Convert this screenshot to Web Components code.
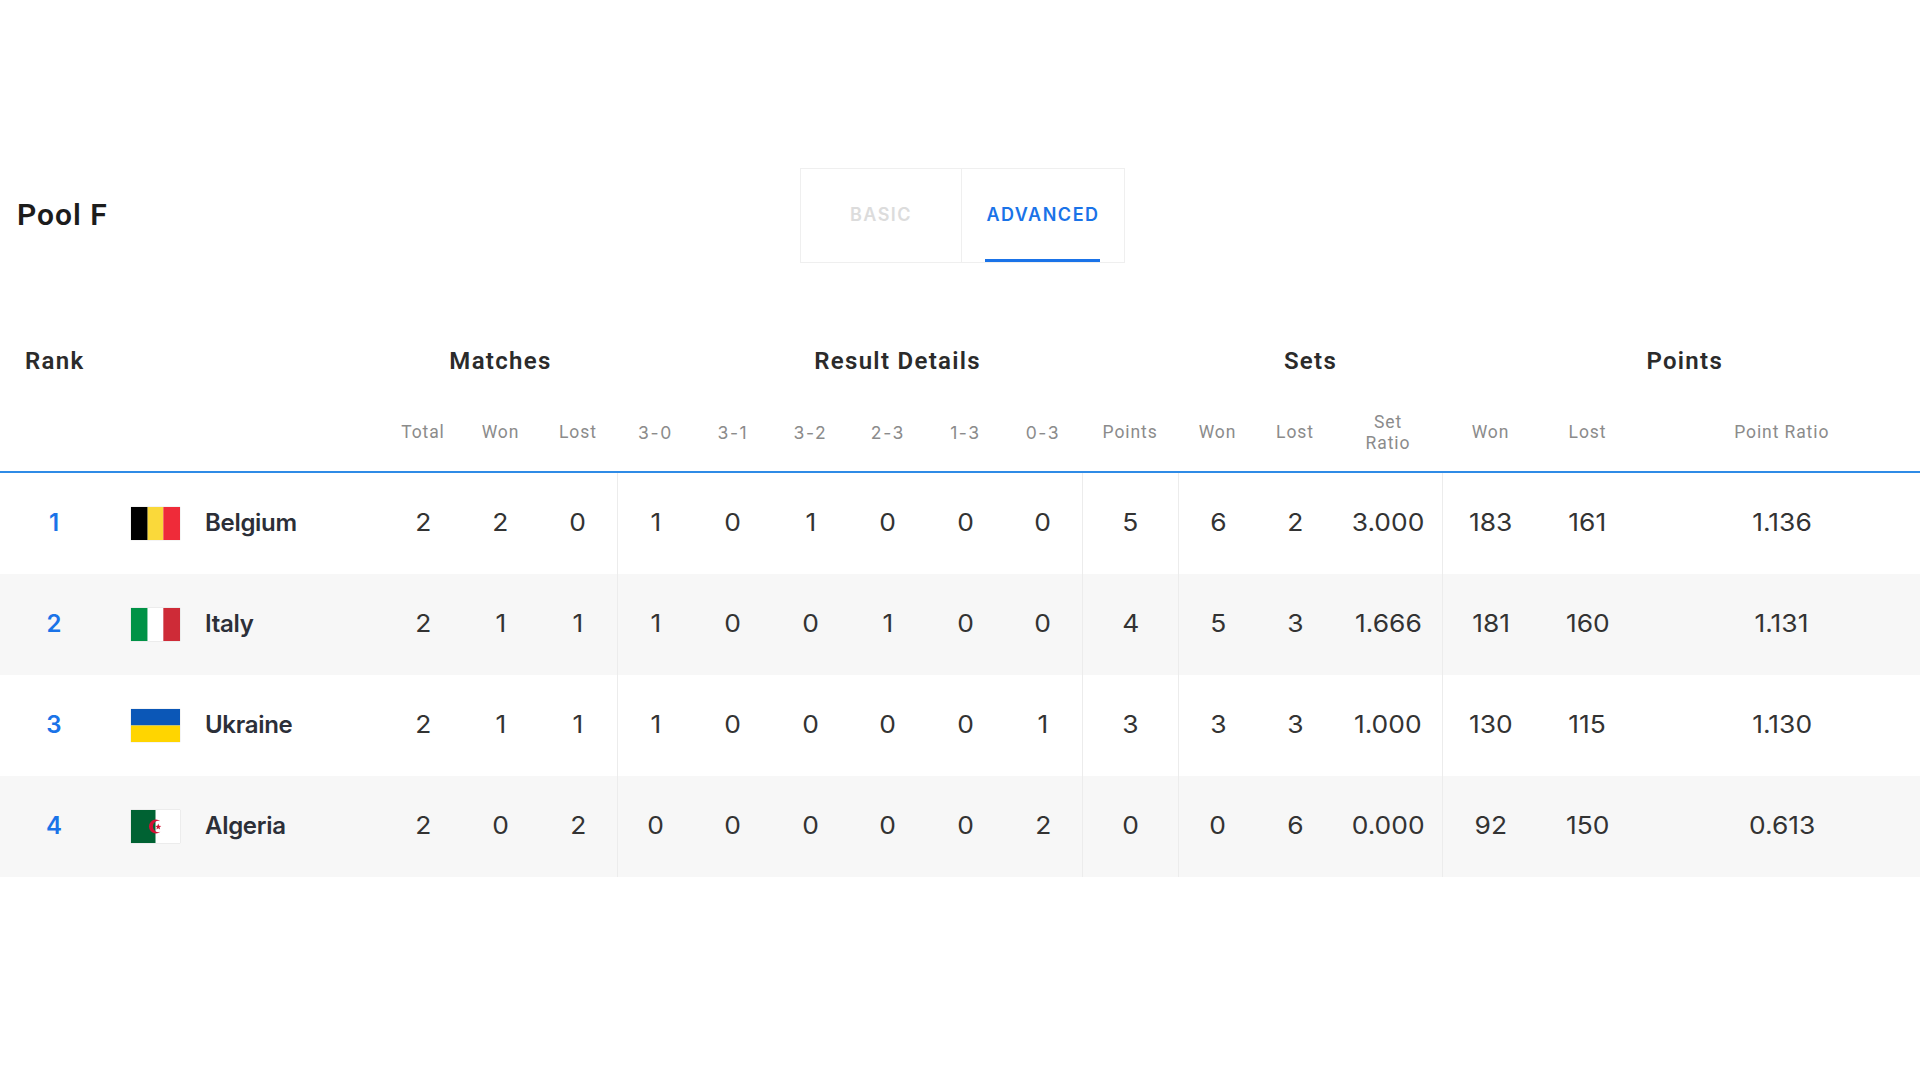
<!DOCTYPE html>
<html lang="en">
<head>
<meta charset="utf-8">
<title>Pool F</title>
<style>
  html, body { margin: 0; background: #fff; }
  body { --cols: 108px 276.2px repeat(9, 77.5px) 96.8px 78px 77px 109px 96px 98px 1fr; }
</style>
</head>
<body>
<pool-standings>
  <span slot="title">Pool F</span>
  <tab-button slot="tabs">BASIC</tab-button>
  <tab-button slot="tabs" active>ADVANCED</tab-button>
  <standing-row rank="1" flag="be" values="2,2,0,1,0,1,0,0,0,5,6,2,3.000,183,161,1.136">Belgium</standing-row>
  <standing-row rank="2" flag="it" values="2,1,1,1,0,0,1,0,0,4,5,3,1.666,181,160,1.131" striped>Italy</standing-row>
  <standing-row rank="3" flag="ua" values="2,1,1,1,0,0,0,0,1,3,3,3,1.000,130,115,1.130">Ukraine</standing-row>
  <standing-row rank="4" flag="dz" values="2,0,2,0,0,0,0,0,2,0,0,6,0.000,92,150,0.613" striped>Algeria</standing-row>
</pool-standings>

<script>
class PoolStandings extends HTMLElement {
  constructor() {
    super();
    this.attachShadow({ mode: "open" });
    const subs = ["Total", "Won", "Lost", "3-0", "3-1", "3-2", "2-3", "1-3", "0-3", "Points", "Won", "Lost", "Set<br>Ratio", "Won", "Lost", "Point Ratio"];
    this.shadowRoot.innerHTML = `
      <style>
        :host { display: block; padding-top: 168px; font-family: Roboto, "Liberation Sans", sans-serif; }
        header { display: grid; grid-template-columns: 800px auto; justify-content: start; align-items: center; }
        h2 { margin: 0 0 1px 17px; font: 600 30px/34px Roboto, sans-serif; letter-spacing: 1px; color: #1c1c1c; }
        .tabs { display: flex; border: 1px solid #efefef; }
        .groups, .subs { display: grid; grid-template-columns: var(--cols); text-align: center; }
        .groups { margin-top: 83px; font-size: 24px; line-height: 30px; font-weight: 600; letter-spacing: 1.3px; color: #2b2b2b; }
        .groups .rank { grid-column: 1 / 3; text-align: left; padding-left: 25px; }
        .groups .m { grid-column: 3 / span 3; }
        .groups .r { grid-column: 6 / span 7; }
        .groups .s { grid-column: 13 / span 3; }
        .groups .p { grid-column: 16 / span 3; padding-left: 7px; }
        .subs { height: 97px; align-items: center; padding-top: 18px; box-sizing: border-box; border-bottom: 2px solid #2f8be6;
          font-size: 17.5px; line-height: 21px; letter-spacing: .9px; color: #8b8b8b; }
        .subs div:first-child { grid-column: 3; }
        .subs div:last-child { padding-left: 7px; }
        .subs .score { font-family: Inter, sans-serif; letter-spacing: 1.6px; }
      </style>
      <header>
        <h2><slot name="title"></slot></h2>
        <div class="tabs"><slot name="tabs"></slot></div>
      </header>
      <div class="groups">
        <div class="rank">Rank</div><div class="m">Matches</div><div class="r">Result Details</div><div class="s">Sets</div><div class="p">Points</div>
      </div>
      <div class="subs">${subs.map(s => `<div${/^\d/.test(s) ? ' class="score"' : ""}>${s}</div>`).join("")}</div>
      <slot></slot>
    `;
  }
}

class TabButton extends HTMLElement {
  constructor() {
    super();
    this.attachShadow({ mode: "open" });
    this.shadowRoot.innerHTML = `
      <style>
        :host { display: block; width: 160px; height: 93px; box-sizing: border-box; position: relative; text-align: center;
          font: 600 18px/91px Inter, sans-serif; letter-spacing: 1.5px; color: #dcdcdc; }
        :host([active]) { border-left: 1px solid #efefef; width: 163px; color: #1a73e8; }
        :host([active])::after { content: ""; position: absolute; left: 23px; right: 24px; bottom: 0; height: 3px; background: #1a73e8; }
      </style>
      <slot></slot>
    `;
  }
}

class FlagIcon extends HTMLElement {
  static art = {
    be: `<rect width="17" height="33" fill="#000"/><rect x="17" width="16" height="33" fill="#fad93a"/><rect x="33" width="17" height="33" fill="#ef2b39"/>`,
    it: `<rect width="17" height="33" fill="#009246"/><rect x="17" width="16" height="33" fill="#fff"/><rect x="33" width="17" height="33" fill="#ce2b37"/>`,
    ua: `<rect width="50" height="16.5" fill="#0b57b7"/><rect y="16.5" width="50" height="16.5" fill="#ffd500"/>`,
    dz: `<rect width="50" height="33" fill="#fff"/><rect width="25" height="33" fill="#006233"/>
         <path d="M30 11.3a7 7 0 1 0 0 10.4a5.6 5.6 0 1 1 0-10.4z" fill="#d21034"/>
         <path d="M27.8 13.6l.8 2.2l2.3.1l-1.8 1.4l.6 2.2l-1.9-1.3l-1.9 1.3l.6-2.2l-1.8-1.4l2.3-.1z" fill="#d21034"/>`
  };
  constructor() {
    super();
    this.attachShadow({ mode: "open" });
  }
  connectedCallback() {
    this.shadowRoot.innerHTML = `
      <style>
        :host { display: block; width: 49px; height: 33px; flex: none; margin-top: 2px; }
        svg { display: block; width: 49px; height: 33px; box-shadow: 0 0 1px rgba(0,0,0,.25); }
      </style>
      <svg viewBox="0 0 50 33" preserveAspectRatio="none">${FlagIcon.art[this.getAttribute("code")]}</svg>
    `;
  }
}

class StandingRow extends HTMLElement {
  constructor() {
    super();
    this.attachShadow({ mode: "open" });
  }
  connectedCallback() {
    const values = this.getAttribute("values").split(",");
    // a light rule opens the 3-0, Points, Won (sets) and Won (points) columns
    const ruled = [3, 9, 10, 13];
    const cells = values.map((v, i) => `<div class="${ruled.includes(i) ? "rule" : ""}${i == 15 ? " last" : ""}"><b>${v}</b></div>`);
    this.shadowRoot.innerHTML = `
      <style>
        :host { display: grid; grid-template-columns: var(--cols); height: 101px; align-items: stretch; text-align: center;
          font: 400 24px Inter, sans-serif; color: #333; }
        :host([striped]) { background: #f7f7f7; }
        div { display: flex; align-items: center; justify-content: center; padding-bottom: 2px; box-sizing: border-box; }
        b { font-weight: 400; display: inline-block; transform: scaleX(1.1); }
        .rank { font-weight: 600; color: #1a73e8; }
        .team { justify-content: flex-start; gap: 25px; padding-left: 23px; font-weight: 600; letter-spacing: -.3px; color: #2c2f38; }
        .rule { border-left: 1px solid #ececec; }
        .last { padding-left: 7px; }
      </style>
      <div class="rank">${this.getAttribute("rank")}</div>
      <div class="team"><flag-icon code="${this.getAttribute("flag")}"></flag-icon><span><slot></slot></span></div>
      ${cells.join("")}
    `;
  }
}

customElements.define("flag-icon", FlagIcon);
customElements.define("tab-button", TabButton);
customElements.define("standing-row", StandingRow);
customElements.define("pool-standings", PoolStandings);
</script>
</body>
</html>
